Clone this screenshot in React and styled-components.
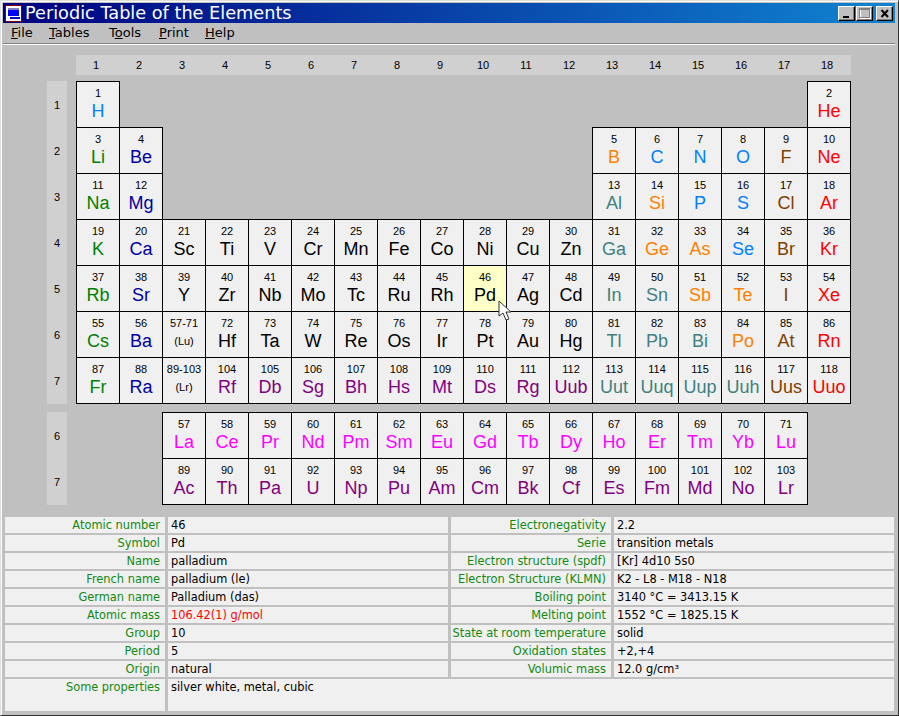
import React from 'react';
import styled, { createGlobalStyle } from 'styled-components';

const GlobalStyle = createGlobalStyle`
  html, body {
    margin: 0;
    padding: 0;
    background: #c0c0c0;
  }
`;

const BLUE = '#0080ff';
const GREEN = '#008000';
const NAVY = '#0000a0';
const ORANGE = '#ff8000';
const BROWN = '#804000';
const RED = '#ff0000';
const TEAL = '#408080';
const PURPLE = '#800080';
const PINK = '#ff00ff';
const BLACK = '#000000';

// [number, symbol, colour, column], column left out means next one along
const rowOf = (row, startCol, items) =>
  items.map((it, i) => ({ n: it[0], s: it[1], c: it[2], col: (it[3] || startCol + i), row }));

const ELEMENTS = [
  ...rowOf(1, 1, [[1, 'H', BLUE, 1], [2, 'He', RED, 18]]),
  ...rowOf(2, 1, [[3, 'Li', GREEN, 1], [4, 'Be', NAVY, 2], [5, 'B', ORANGE, 13], [6, 'C', BLUE, 14], [7, 'N', BLUE, 15], [8, 'O', BLUE, 16], [9, 'F', BROWN, 17], [10, 'Ne', RED, 18]]),
  ...rowOf(3, 1, [[11, 'Na', GREEN, 1], [12, 'Mg', NAVY, 2], [13, 'Al', TEAL, 13], [14, 'Si', ORANGE, 14], [15, 'P', BLUE, 15], [16, 'S', BLUE, 16], [17, 'Cl', BROWN, 17], [18, 'Ar', RED, 18]]),
  ...rowOf(4, 1, [[19, 'K', GREEN], [20, 'Ca', NAVY], [21, 'Sc', BLACK], [22, 'Ti', BLACK], [23, 'V', BLACK], [24, 'Cr', BLACK], [25, 'Mn', BLACK], [26, 'Fe', BLACK], [27, 'Co', BLACK], [28, 'Ni', BLACK], [29, 'Cu', BLACK], [30, 'Zn', BLACK], [31, 'Ga', TEAL], [32, 'Ge', ORANGE], [33, 'As', ORANGE], [34, 'Se', BLUE], [35, 'Br', BROWN], [36, 'Kr', RED]]),
  ...rowOf(5, 1, [[37, 'Rb', GREEN], [38, 'Sr', NAVY], [39, 'Y', BLACK], [40, 'Zr', BLACK], [41, 'Nb', BLACK], [42, 'Mo', BLACK], [43, 'Tc', BLACK], [44, 'Ru', BLACK], [45, 'Rh', BLACK], [46, 'Pd', BLACK], [47, 'Ag', BLACK], [48, 'Cd', BLACK], [49, 'In', TEAL], [50, 'Sn', TEAL], [51, 'Sb', ORANGE], [52, 'Te', ORANGE], [53, 'I', BROWN], [54, 'Xe', RED]]),
  ...rowOf(6, 1, [[55, 'Cs', GREEN], [56, 'Ba', NAVY], ['57-71', '(Lu)', 'range'], [72, 'Hf', BLACK], [73, 'Ta', BLACK], [74, 'W', BLACK], [75, 'Re', BLACK], [76, 'Os', BLACK], [77, 'Ir', BLACK], [78, 'Pt', BLACK], [79, 'Au', BLACK], [80, 'Hg', BLACK], [81, 'Tl', TEAL], [82, 'Pb', TEAL], [83, 'Bi', TEAL], [84, 'Po', ORANGE], [85, 'At', BROWN], [86, 'Rn', RED]]),
  ...rowOf(7, 1, [[87, 'Fr', GREEN], [88, 'Ra', NAVY], ['89-103', '(Lr)', 'range'], [104, 'Rf', PURPLE], [105, 'Db', PURPLE], [106, 'Sg', PURPLE], [107, 'Bh', PURPLE], [108, 'Hs', PURPLE], [109, 'Mt', PURPLE], [110, 'Ds', PURPLE], [111, 'Rg', PURPLE], [112, 'Uub', PURPLE], [113, 'Uut', TEAL], [114, 'Uuq', TEAL], [115, 'Uup', TEAL], [116, 'Uuh', TEAL], [117, 'Uus', BROWN], [118, 'Uuo', RED]]),
];

const RARE = [
  ...rowOf(1, 3, [[57, 'La', PINK], [58, 'Ce', PINK], [59, 'Pr', PINK], [60, 'Nd', PINK], [61, 'Pm', PINK], [62, 'Sm', PINK], [63, 'Eu', PINK], [64, 'Gd', PINK], [65, 'Tb', PINK], [66, 'Dy', PINK], [67, 'Ho', PINK], [68, 'Er', PINK], [69, 'Tm', PINK], [70, 'Yb', PINK], [71, 'Lu', PINK]]),
  ...rowOf(2, 3, [[89, 'Ac', PURPLE], [90, 'Th', PURPLE], [91, 'Pa', PURPLE], [92, 'U', PURPLE], [93, 'Np', PURPLE], [94, 'Pu', PURPLE], [95, 'Am', PURPLE], [96, 'Cm', PURPLE], [97, 'Bk', PURPLE], [98, 'Cf', PURPLE], [99, 'Es', PURPLE], [100, 'Fm', PURPLE], [101, 'Md', PURPLE], [102, 'No', PURPLE], [103, 'Lr', PURPLE]]),
];

const INFO = [
  ['Atomic number', '46', 'Electronegativity', '2.2'],
  ['Symbol', 'Pd', 'Serie', 'transition metals'],
  ['Name', 'palladium', 'Electron structure (spdf)', '[Kr] 4d10 5s0'],
  ['French name', 'palladium (le)', 'Electron Structure (KLMN)', 'K2 - L8 - M18 - N18'],
  ['German name', 'Palladium (das)', 'Boiling point', '3140 °C = 3413.15 K'],
  ['Atomic mass', '106.42(1) g/mol', 'Melting point', '1552 °C = 1825.15 K'],
  ['Group', '10', 'State at room temperature', 'solid'],
  ['Period', '5', 'Oxidation states', '+2,+4'],
  ['Origin', 'natural', 'Volumic mass', '12.0 g/cm³'],
];

const Window = styled.div`
  width: 899px;
  height: 716px;
  box-sizing: border-box;
  padding: 2px 3px 3px 2px;
  background: #c0c0c0;
  border-style: solid;
  border-width: 1px;
  border-color: #dfdfdf #303030 #303030 #dfdfdf;
  box-shadow: inset 1px 1px 0 #ffffff;
  display: flex;
  flex-direction: column;
  font-family: "DejaVu Sans", sans-serif;
  overflow: hidden;
  position: relative;
`;

const TitleBar = styled.div`
  height: 20px;
  flex: none;
  display: flex;
  align-items: center;
  padding: 0 2px;
  background: linear-gradient(to right, #000080, #1084d0);
`;

const TitleText = styled.div`
  flex: 1;
  margin-left: 3px;
  color: #ffffff;
  font-size: 17.7px;
  line-height: 20px;
  white-space: nowrap;
`;

const WinButton = styled.div`
  width: 17px;
  height: 15px;
  box-sizing: border-box;
  margin-left: ${props => props.$gap}px;
  background: #c0c0c0;
  border: 1px solid;
  border-color: #ffffff #000000 #000000 #ffffff;
  box-shadow: inset -1px -1px 0 #808080;
  display: flex;
  align-items: center;
  justify-content: center;
`;

const MenuBar = styled.div`
  height: 20px;
  box-sizing: border-box;
  padding: 0 0 2px 8px;
  flex: none;
  display: flex;
  align-items: center;
  font-size: 13px;
  color: #000000;
`;

const MenuItem = styled.span`
  width: ${props => props.$width}px;
  u { text-decoration: underline; }
`;

const Rule = styled.div`
  flex: none;
  height: 1px;
  background: #808080;
  border-bottom: 1px solid #ffffff;
`;

const Content = styled.div`
  flex: 1;
  display: flex;
  flex-direction: column;
  padding: 10px 0 0 2px;
`;

const ColHeader = styled.div`
  margin-left: 71px;
  width: 775px;
  height: 20px;
  background: #d0d0d0;
  display: grid;
  grid-template-columns: repeat(18, 43px);
  flex: none;
`;

const HeadNum = styled.div`
  font-family: "Liberation Sans", Arial, sans-serif;
  font-size: 11px;
  line-height: 20px;
  text-align: center;
  padding-right: 3px;
`;

const TableRow = styled.div`
  display: flex;
  margin-left: 42px;
  margin-top: ${props => props.$top}px;
  flex: none;
`;

const RowHeader = styled.div`
  width: 20px;
  margin-right: 9px;
  padding-bottom: 1px;
  background: #d0d0d0;
  display: grid;
  grid-auto-rows: 46px;
  flex: none;
`;

const RowNum = styled.div`
  font-family: "Liberation Sans", Arial, sans-serif;
  font-size: 11px;
  padding-top: 2px;
  display: flex;
  align-items: center;
  justify-content: center;
`;

const Grid = styled.div`
  display: grid;
  grid-template-columns: repeat(18, 43px);
  grid-auto-rows: 46px;
`;

const Cell = styled.div`
  width: 44px;
  height: 47px;
  box-sizing: border-box;
  border: 1px solid #000000;
  background: ${props => (props.$active ? '#ffffc8' : '#f0f0f0')};
  grid-column: ${props => props.$col};
  grid-row: ${props => props.$row};
  text-align: center;
  color: ${props => props.$color};
  font-family: "Liberation Sans", Arial, sans-serif;
`;

const Num = styled.div`
  font-size: 11px;
  line-height: 12px;
  margin-top: 5px;
  color: #000000;
`;

const Sym = styled.div`
  font-size: 18px;
  line-height: 20px;
  margin-top: 2px;
`;

const RangeNote = styled.div`
  font-size: 11px;
  line-height: 14px;
  margin-top: 5px;
  color: #000000;
`;

const InfoTable = styled.div`
  margin-top: 12px;
  display: grid;
  grid-template-columns: 160px 280px 160px 280px;
  column-gap: 3px;
  row-gap: 2px;
  grid-auto-rows: 16px;
  font-size: 11.4px;
  flex: none;
`;

const Label = styled.div`
  background: #f0f0f0;
  color: #128a12;
  text-align: right;
  padding-right: 5px;
  line-height: 17px;
  white-space: nowrap;
  ${props => props.$tall && 'grid-row: span 2; height: 32px;'}
`;

const Value = styled.div`
  background: #f0f0f0;
  color: ${props => props.$color || '#000000'};
  padding-left: 3px;
  line-height: 17px;
  white-space: nowrap;
  ${props => props.$tall && 'grid-row: span 2; grid-column: span 3; height: 32px;'}
`;

const Pointer = styled.svg`
  position: absolute;
  left: 497px;
  top: 299px;
`;

function ElementCell({ el }) {
  const isRange = el.c === 'range';
  return (
    <Cell $col={el.col} $row={el.row} $color={el.c} $active={el.n === 46}>
      <Num>{el.n}</Num>
      {isRange ? <RangeNote>{el.s}</RangeNote> : <Sym>{el.s}</Sym>}
    </Cell>
  );
}

function App() {
  return (
    <Window>
      <GlobalStyle />
      <TitleBar>
        <svg width="17" height="17" viewBox="0 0 17 17">
          <rect x="0.5" y="0.5" width="16" height="16" fill="#ffffff" stroke="#800000" />
          <rect x="3" y="3" width="11" height="2" fill="#8080c0" />
          <rect x="3" y="5" width="11" height="6" fill="#0000ff" />
          <rect x="5" y="12" width="10" height="2" fill="#0000c0" />
        </svg>
        <TitleText>Periodic Table of the Elements</TitleText>
        <WinButton $gap={0}>
          <svg width="11" height="11"><rect x="2" y="8" width="6" height="2" fill="#000000" /></svg>
        </WinButton>
        <WinButton $gap={1}>
          <svg width="12" height="11">
            <rect x="1.5" y="1.5" width="10" height="9" fill="none" stroke="#ffffff" />
            <rect x="0.5" y="0.5" width="10" height="9" fill="none" stroke="#808080" />
            <rect x="0" y="1" width="11" height="1" fill="#808080" />
          </svg>
        </WinButton>
        <WinButton $gap={3}>
          <svg width="10" height="9"><path d="M1.5 1l6.5 7M8 1L1.5 8" stroke="#000000" strokeWidth="2" /></svg>
        </WinButton>
      </TitleBar>
      <MenuBar>
        <MenuItem $width={38}><u>F</u>ile</MenuItem>
        <MenuItem $width={60}><u>T</u>ables</MenuItem>
        <MenuItem $width={50}>T<u>o</u>ols</MenuItem>
        <MenuItem $width={46}><u>P</u>rint</MenuItem>
        <MenuItem $width={40}><u>H</u>elp</MenuItem>
      </MenuBar>
      <Rule />
      <Content>
        <ColHeader>
          {Array.from({ length: 18 }, (_, i) => <HeadNum key={i}>{i + 1}</HeadNum>)}
        </ColHeader>
        <TableRow $top={6}>
          <RowHeader>
            {[1, 2, 3, 4, 5, 6, 7].map(n => <RowNum key={n}>{n}</RowNum>)}
          </RowHeader>
          <Grid>
            {ELEMENTS.map(el => <ElementCell key={el.n} el={el} />)}
          </Grid>
        </TableRow>
        <TableRow $top={8}>
          <RowHeader>
            {[6, 7].map(n => <RowNum key={n}>{n}</RowNum>)}
          </RowHeader>
          <Grid>
            {RARE.map(el => <ElementCell key={el.n} el={el} />)}
          </Grid>
        </TableRow>
        <InfoTable>
          {INFO.map(([a, b, c, d]) => (
            <React.Fragment key={a}>
              <Label>{a}</Label>
              <Value $color={a === 'Atomic mass' ? '#ff0000' : undefined}>{b}</Value>
              <Label>{c}</Label>
              <Value>{d}</Value>
            </React.Fragment>
          ))}
          <Label $tall>Some properties</Label>
          <Value $tall>silver white, metal, cubic</Value>
        </InfoTable>
      </Content>
      <Pointer width="14" height="22" viewBox="0 0 14 22">
        <path d="M1 1v15l4-3 3 7 3-1-3-7h5z" fill="#ffffff" stroke="#333333" />
      </Pointer>
    </Window>
  );
}

export default App;
